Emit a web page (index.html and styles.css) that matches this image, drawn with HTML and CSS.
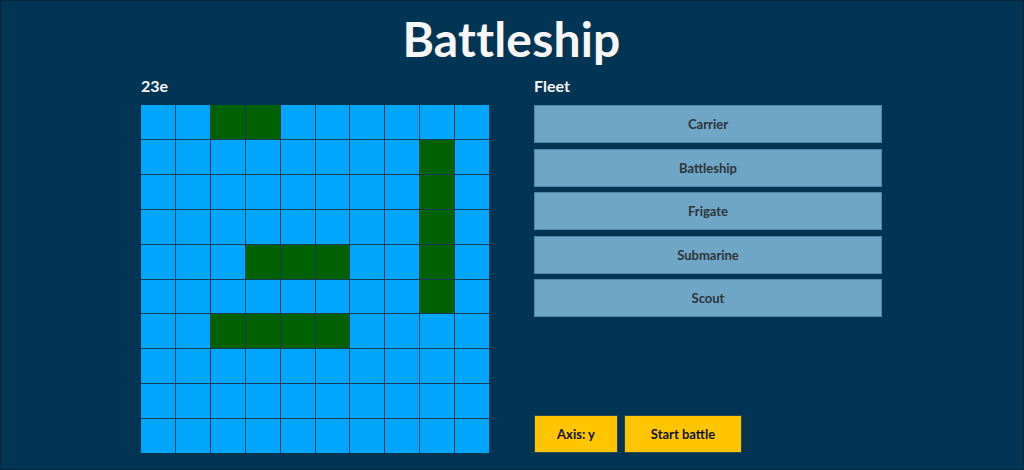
FILE: index.html
```html
<!DOCTYPE html>
<html lang="en">
<head>
<meta charset="utf-8">
<title>Battleship</title>
<link rel="stylesheet" href="styles.css">
</head>
<body>
<main class="page">
  <h1 class="title">Battleship</h1>
  <div class="layout">
    <section class="board-col">
      <h2 class="label">23e</h2>
      <div class="board" id="board">
        <div class="cell"></div><div class="cell"></div><div class="cell ship"></div><div class="cell ship"></div><div class="cell"></div><div class="cell"></div><div class="cell"></div><div class="cell"></div><div class="cell"></div><div class="cell"></div>
        <div class="cell"></div><div class="cell"></div><div class="cell"></div><div class="cell"></div><div class="cell"></div><div class="cell"></div><div class="cell"></div><div class="cell"></div><div class="cell ship"></div><div class="cell"></div>
        <div class="cell"></div><div class="cell"></div><div class="cell"></div><div class="cell"></div><div class="cell"></div><div class="cell"></div><div class="cell"></div><div class="cell"></div><div class="cell ship"></div><div class="cell"></div>
        <div class="cell"></div><div class="cell"></div><div class="cell"></div><div class="cell"></div><div class="cell"></div><div class="cell"></div><div class="cell"></div><div class="cell"></div><div class="cell ship"></div><div class="cell"></div>
        <div class="cell"></div><div class="cell"></div><div class="cell"></div><div class="cell ship"></div><div class="cell ship"></div><div class="cell ship"></div><div class="cell"></div><div class="cell"></div><div class="cell ship"></div><div class="cell"></div>
        <div class="cell"></div><div class="cell"></div><div class="cell"></div><div class="cell"></div><div class="cell"></div><div class="cell"></div><div class="cell"></div><div class="cell"></div><div class="cell ship"></div><div class="cell"></div>
        <div class="cell"></div><div class="cell"></div><div class="cell ship"></div><div class="cell ship"></div><div class="cell ship"></div><div class="cell ship"></div><div class="cell"></div><div class="cell"></div><div class="cell"></div><div class="cell"></div>
        <div class="cell"></div><div class="cell"></div><div class="cell"></div><div class="cell"></div><div class="cell"></div><div class="cell"></div><div class="cell"></div><div class="cell"></div><div class="cell"></div><div class="cell"></div>
        <div class="cell"></div><div class="cell"></div><div class="cell"></div><div class="cell"></div><div class="cell"></div><div class="cell"></div><div class="cell"></div><div class="cell"></div><div class="cell"></div><div class="cell"></div>
        <div class="cell"></div><div class="cell"></div><div class="cell"></div><div class="cell"></div><div class="cell"></div><div class="cell"></div><div class="cell"></div><div class="cell"></div><div class="cell"></div><div class="cell"></div>
      </div>
    </section>
    <section class="fleet-col">
      <h2 class="label">Fleet</h2>
      <div class="fleet">
        <button class="ship-btn">Carrier</button>
        <button class="ship-btn">Battleship</button>
        <button class="ship-btn">Frigate</button>
        <button class="ship-btn">Submarine</button>
        <button class="ship-btn">Scout</button>
      </div>
      <div class="controls">
        <button class="action-btn axis-btn">Axis: y</button>
        <button class="action-btn start-btn">Start battle</button>
      </div>
    </section>
  </div>
</main>
</body>
</html>
```

FILE: styles.css
```css
* {
  box-sizing: border-box;
}

html,
body {
  height: 100%;
}

html {
  box-shadow: inset 0 0 0 1px #01263d;
}

body {
  margin: 0;
  background: #023554;
  color: #f7f7f7;
  font-family: "Lato", "Open Sans", sans-serif;
}

.page {
  width: 741px;
  margin-left: calc(50% - 371px);
}

.title {
  margin: 0;
  padding-top: 13px;
  height: 75px;
  text-align: center;
  font-size: 48px;
  font-weight: 700;
  line-height: 52px;
  letter-spacing: 0.2px;
}

.layout {
  display: grid;
  grid-template-columns: 348px 348px;
  column-gap: 45px;
}

.board-col,
.fleet-col {
  display: flex;
  flex-direction: column;
}

.label {
  margin: 0;
  height: 30px;
  padding-top: 1px;
  font-size: 16px;
  font-weight: 700;
  line-height: 20px;
}

.board {
  display: grid;
  grid-template-columns: repeat(10, 1fr);
  grid-template-rows: repeat(10, 1fr);
  gap: 1px;
  width: 348px;
  height: 348px;
  background: #173a55;
}

.cell {
  background: #00a6fb;
}

.cell.ship {
  background: #006100;
}

.fleet {
  display: flex;
  flex-direction: column;
  gap: 5.6px;
}

.ship-btn {
  height: 38px;
  margin: 0;
  background: #6fa6c6;
  border: 1px solid #4f88ab;
  color: #2e3338;
  font-family: inherit;
  font-size: 13px;
  font-weight: 700;
}

.controls {
  margin-top: auto;
  display: flex;
  gap: 6px;
}

.action-btn {
  height: 38px;
  margin: 0;
  background: #ffc500;
  border: 1px solid #2b4650;
  color: #111;
  font-family: inherit;
  font-size: 13px;
  font-weight: 700;
}

.axis-btn {
  width: 84px;
}

.start-btn {
  width: 118px;
}
```
